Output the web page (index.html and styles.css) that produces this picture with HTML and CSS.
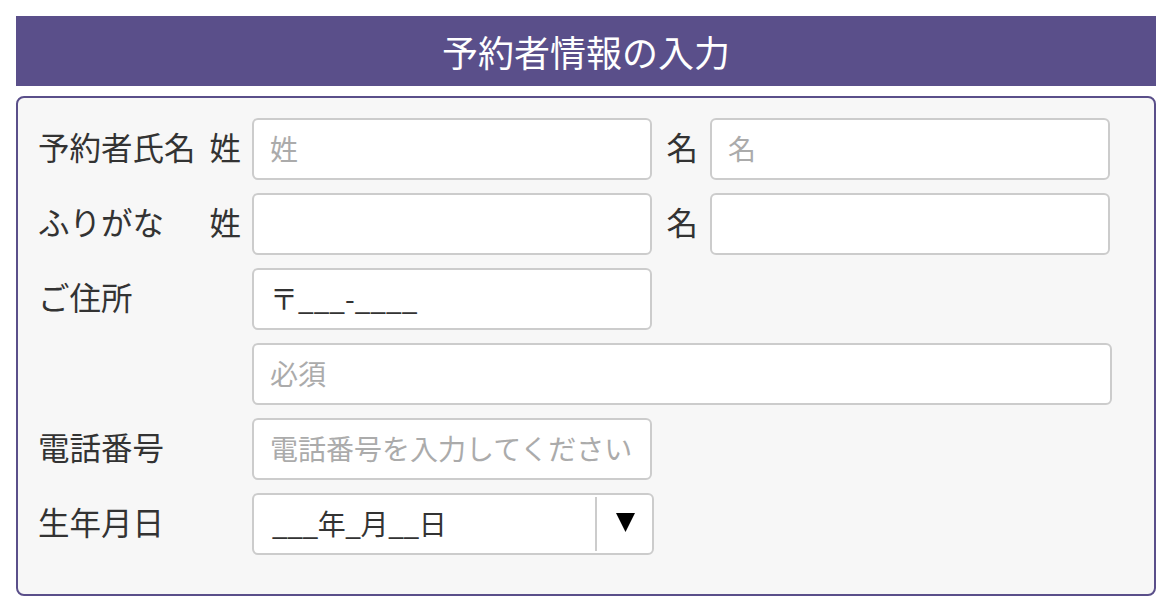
FILE: index.html
```html
<!DOCTYPE html>
<html lang="ja">
<head>
<meta charset="utf-8">
<title>予約者情報の入力</title>
<link rel="stylesheet" href="styles.css">
</head>
<body>
<h1 class="title">予約者情報の入力</h1>
<form class="box">
  <div class="label">予約者氏名</div>
  <div class="sub">姓</div>
  <input class="field" type="text" placeholder="姓">
  <div class="sub2">名</div>
  <input class="field" type="text" placeholder="名">

  <div class="label">ふりがな</div>
  <div class="sub">姓</div>
  <input class="field" type="text">
  <div class="sub2">名</div>
  <input class="field" type="text">

  <div class="label wide">ご住所</div>
  <input class="field" type="text" value="〒___-____">
  <div class="spacer"></div>

  <div class="wide"></div>
  <input class="field full" type="text" placeholder="必須">

  <div class="label wide">電話番号</div>
  <input class="field" type="text" placeholder="電話番号を入力してください">
  <div class="spacer"></div>

  <div class="label wide">生年月日</div>
  <div class="select">
    <span class="select-value">___年_月__日</span>
    <span class="select-btn">
      <svg width="19" height="19" viewBox="0 0 19 19"><polygon points="0,0 19,0 9.5,19" fill="#000"/></svg>
    </span>
  </div>
  <div class="spacer"></div>
</form>
</body>
</html>
```

FILE: styles.css
```css
html, body {
  margin: 0;
  padding: 0;
  background: #ffffff;
}
body {
  padding: 16px;
  font-family: "Noto Sans CJK JP", "Noto Sans", sans-serif;
  color: #333333;
}
.title {
  margin: 0;
  height: 70px;
  line-height: 70px;
  background: #5a4f8a;
  color: #ffffff;
  text-align: center;
  font-size: 36px;
  font-weight: 400;
  letter-spacing: 0;
}
.box {
  margin-top: 10px;
  border: 2px solid #5a4f8a;
  border-radius: 8px;
  background: #f7f7f7;
  padding: 20px 20px 39px 20px;
  display: grid;
  grid-template-columns: 166px 48px 400px 58px 400px;
  grid-auto-rows: 62px;
  row-gap: 13px;
  align-items: center;
}
.label,
.sub,
.sub2 {
  font-size: 31.5px;
  line-height: 1;
  color: #333333;
  white-space: nowrap;
  padding-bottom: 5px;
}
.wide {
  grid-column: 1 / 3;
}
.sub {
  text-align: right;
  padding-right: 11px;
}
.sub2 {
  text-align: right;
  padding-right: 12px;
}
.spacer {
  grid-column: 4 / 6;
}
.field {
  box-sizing: border-box;
  height: 62px;
  width: 400px;
  margin: 0;
  border: 2px solid #cccccc;
  border-radius: 6px;
  background: #ffffff;
  padding: 0 16px 2px 16px;
  font-family: "Noto Sans CJK JP", "Noto Sans", sans-serif;
  font-size: 28px;
  color: #333333;
  outline: none;
}
.field::placeholder {
  color: #ababab;
  opacity: 1;
}
.full {
  grid-column: 3 / 6;
  width: 860px;
}
.select {
  box-sizing: border-box;
  width: 402px;
  height: 62px;
  border: 2px solid #cccccc;
  border-radius: 6px;
  background: #ffffff;
  display: flex;
  align-items: stretch;
}
.select-value {
  flex: 1;
  display: flex;
  align-items: center;
  padding-left: 18px;
  padding-bottom: 2px;
  font-size: 28px;
  letter-spacing: -0.4px;
  color: #333333;
}
.select-btn {
  width: 54px;
  margin: 2px 0;
  border-left: 2px solid #cccccc;
  display: flex;
  align-items: center;
  justify-content: center;
  padding-left: 1px;
  padding-bottom: 4px;
}
```
